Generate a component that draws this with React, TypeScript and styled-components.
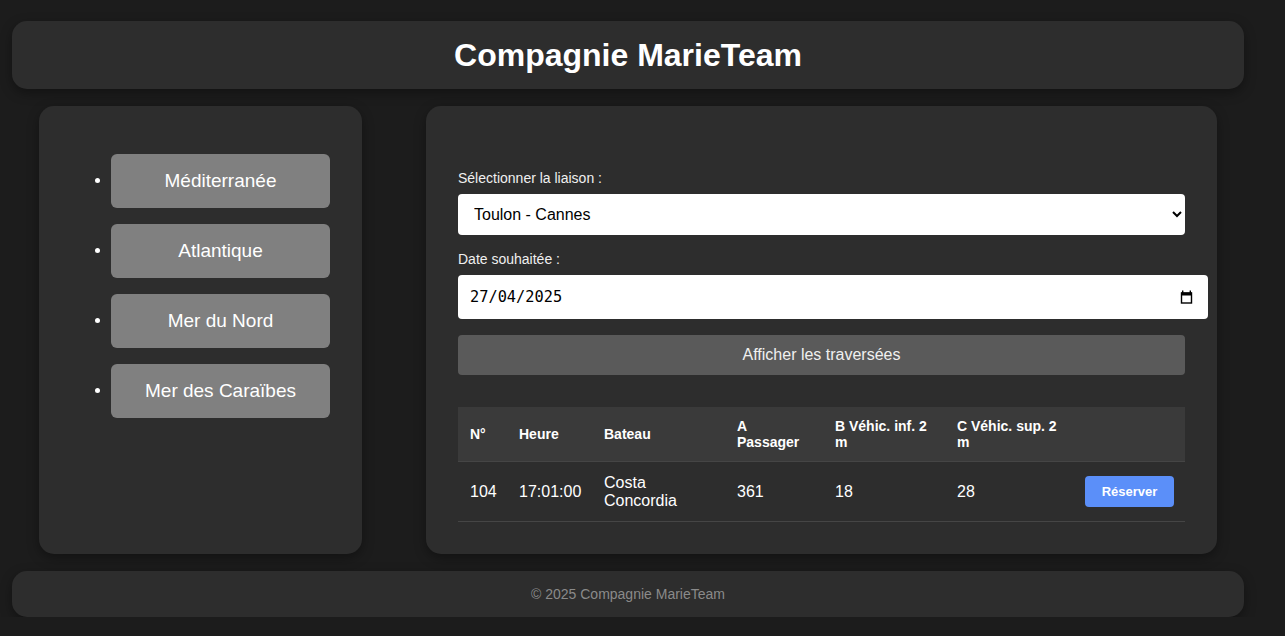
import React from "react";
import styled, { createGlobalStyle } from "styled-components";

const Global = createGlobalStyle`
  html, body { margin: 0; padding: 0; background: #1c1c1c; }
  body { font-family: "Liberation Sans", Arial, sans-serif; color: #fff; }
  * { box-sizing: border-box; }
`;

const Page = styled.div`
  width: 1232px;
  margin-left: 12px;
  padding-top: 21px;
  display: flex;
  flex-direction: column;
  gap: 17px;
`;

const Card = styled.div`
  background: #2d2d2d;
  border-radius: 15px;
  box-shadow: 0 4px 12px rgba(0, 0, 0, 0.35);
`;

const Header = styled(Card)`
  height: 68px;
  display: flex;
  align-items: center;
  justify-content: center;
`;

const Title = styled.h1`
  margin: 0;
  font-size: 32px;
  font-weight: bold;
  color: #fff;
`;

const Content = styled.div`
  display: flex;
  gap: 64px;
  padding: 0 27px;
  align-items: stretch;
`;

const Sidebar = styled(Card)`
  width: 323px;
  flex: none;
  padding: 32px;
`;

const NavList = styled.ul`
  margin: 16px 0;
  padding-left: 40px;
  display: flex;
  flex-direction: column;
  gap: 16px;
  color: #fff;
`;

const NavItem = styled.li`
  display: list-item;
`;

const NavButton = styled.button`
  width: 219px;
  height: 54px;
  background: #808080;
  border: none;
  border-radius: 6px;
  color: #fff;
  font-family: "Liberation Sans", Arial, sans-serif;
  font-size: 19px;
  vertical-align: middle;
`;

const Main = styled(Card)`
  width: 791px;
  flex: none;
  min-width: 0;
  padding: 64px 32px 32px;
`;

const Label = styled.label`
  display: block;
  font-size: 14px;
  line-height: 16px;
  color: #f0f0f0;
  margin-bottom: 8px;
`;

const Select = styled.select`
  display: block;
  width: 100%;
  height: 41px;
  padding: 0 12px;
  border: none;
  border-radius: 4px;
  background: #fff;
  color: #000;
  font-family: "Liberation Sans", Arial, sans-serif;
  font-size: 16px;
  margin-bottom: 16px;
`;

const DateField = styled.div`
  display: flex;
  align-items: center;
  width: calc(100% + 23px);
  height: 44px;
  padding: 0 15px 0 12px;
  border-radius: 4px;
  background: #fff;
  margin-bottom: 16px;
`;

const DateText = styled.input`
  flex: 1;
  min-width: 0;
  border: none;
  outline: none;
  padding: 0;
  background: transparent;
  color: #000;
  font-family: "DejaVu Sans Mono", monospace;
  font-size: 15.3px;
`;

const CalendarIcon = () => (
  <svg width="13" height="14" viewBox="0 0 13 14" aria-hidden="true">
    <rect x="1.5" y="3" width="10" height="10" fill="none" stroke="#000" strokeWidth="1.4" />
    <rect x="1" y="2.5" width="11" height="3" fill="#000" />
    <rect x="2" y="0.5" width="1.4" height="2.5" fill="#000" />
    <rect x="9.6" y="0.5" width="1.4" height="2.5" fill="#000" />
  </svg>
);

const ShowButton = styled.button`
  display: block;
  width: 100%;
  height: 40px;
  border: none;
  border-radius: 4px;
  background: #5a5a5a;
  color: #f0f0f0;
  font-family: "Liberation Sans", Arial, sans-serif;
  font-size: 16px;
  margin-bottom: 32px;
`;

const Table = styled.table`
  width: 100%;
  border-collapse: collapse;
  table-layout: fixed;
`;

const Th = styled.th`
  background: #3a3a3a;
  text-align: left;
  font-size: 14px;
  font-weight: bold;
  color: #fff;
  padding: 11px 12px;
  border-bottom: 1px solid #454545;
  vertical-align: middle;
`;

const Td = styled.td`
  font-size: 16px;
  color: #fff;
  padding: 11.5px 12px;
  border-bottom: 1px solid #454545;
  vertical-align: middle;
`;

const BookButton = styled.button`
  width: 89px;
  height: 31px;
  border: none;
  border-radius: 4px;
  background: #5b8ff9;
  color: #fff;
  font-family: "Liberation Sans", Arial, sans-serif;
  font-size: 13px;
  font-weight: bold;
`;

const Footer = styled(Card)`
  height: 46px;
  display: flex;
  align-items: center;
  justify-content: center;
  font-size: 14px;
  color: #8a8a8a;
`;

const seas = ["Méditerranée", "Atlantique", "Mer du Nord", "Mer des Caraïbes"];
const widths = [49, 85, 133, 98, 122, 128, 112];

export default function App() {
  return (
    <>
      <Global />
      <Page>
        <Header>
          <Title>Compagnie MarieTeam</Title>
        </Header>
        <Content>
          <Sidebar>
            <NavList>
              {seas.map((s) => (
                <NavItem key={s}>
                  <NavButton>{s}</NavButton>
                </NavItem>
              ))}
            </NavList>
          </Sidebar>
          <Main>
            <Label htmlFor="liaison">Sélectionner la liaison :</Label>
            <Select id="liaison" defaultValue="tc">
              <option value="tc">Toulon - Cannes</option>
            </Select>
            <Label htmlFor="date">Date souhaitée :</Label>
            <DateField>
              <DateText id="date" type="text" defaultValue="27/04/2025" />
              <CalendarIcon />
            </DateField>
            <ShowButton>Afficher les traversées</ShowButton>
            <Table>
              <colgroup>
                {widths.map((w, i) => (
                  <col key={i} style={{ width: w }} />
                ))}
              </colgroup>
              <thead>
                <tr>
                  <Th>N°</Th>
                  <Th>Heure</Th>
                  <Th>Bateau</Th>
                  <Th>A Passager</Th>
                  <Th>B Véhic. inf. 2 m</Th>
                  <Th>C Véhic. sup. 2 m</Th>
                  <Th></Th>
                </tr>
              </thead>
              <tbody>
                <tr>
                  <Td>104</Td>
                  <Td>17:01:00</Td>
                  <Td>Costa Concordia</Td>
                  <Td>361</Td>
                  <Td>18</Td>
                  <Td>28</Td>
                  <Td>
                    <BookButton>Réserver</BookButton>
                  </Td>
                </tr>
              </tbody>
            </Table>
          </Main>
        </Content>
        <Footer>© 2025 Compagnie MarieTeam</Footer>
      </Page>
    </>
  );
}
